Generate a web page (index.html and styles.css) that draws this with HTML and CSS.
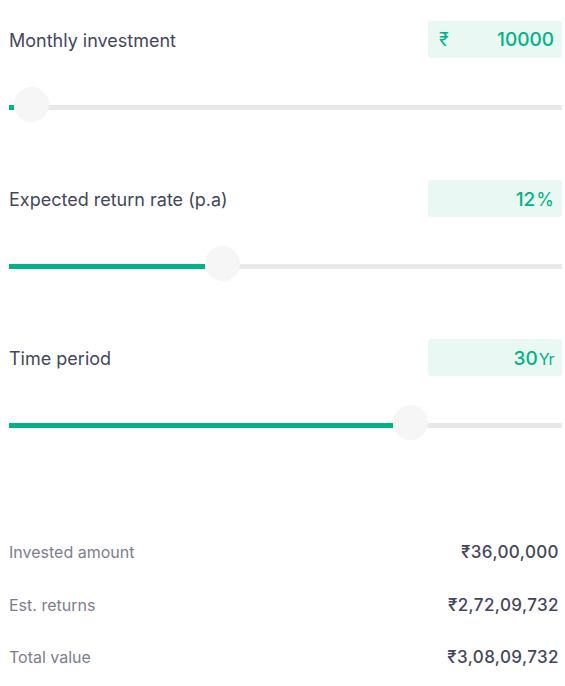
FILE: index.html
```html
<!DOCTYPE html>
<html lang="en">
<head>
<meta charset="utf-8">
<title>SIP Calculator</title>
<link rel="stylesheet" href="styles.css">
</head>
<body>
<div class="calc">
  <div class="field">
    <div class="field-head">
      <span class="label">Monthly investment</span>
      <div class="value-box">
        <span class="unit-left">₹</span>
        <span class="num">10000</span>
      </div>
    </div>
    <div class="slider">
      <div class="fill" style="width:5px"></div>
      <div class="thumb" style="left:5px"></div>
    </div>
  </div>

  <div class="field">
    <div class="field-head">
      <span class="label">Expected return rate (p.a)</span>
      <div class="value-box end">
        <span class="num">12</span><span class="pct">%</span>
      </div>
    </div>
    <div class="slider">
      <div class="fill" style="width:196px"></div>
      <div class="thumb" style="left:196px"></div>
    </div>
  </div>

  <div class="field">
    <div class="field-head">
      <span class="label">Time period</span>
      <div class="value-box end">
        <span class="num">30</span><span class="yr">Yr</span>
      </div>
    </div>
    <div class="slider">
      <div class="fill" style="width:384px"></div>
      <div class="thumb" style="left:384px"></div>
    </div>
  </div>

  <div class="results">
    <div class="row"><span class="r-label">Invested amount</span><span class="r-value">₹36,00,000</span></div>
    <div class="row"><span class="r-label">Est. returns</span><span class="r-value">₹2,72,09,732</span></div>
    <div class="row"><span class="r-label">Total value</span><span class="r-value">₹3,08,09,732</span></div>
  </div>
</div>
</body>
</html>
```

FILE: styles.css
```css
body {
  margin: 0;
  background: #ffffff;
  font-family: Inter, "Noto Sans", "DejaVu Sans", sans-serif;
}

.calc {
  width: 553px;
  margin-left: 9px;
  padding-top: 21px;
  display: flex;
  flex-direction: column;
}

.field {
  display: flex;
  flex-direction: column;
  margin-bottom: 70px;
}

.field-head {
  display: flex;
  justify-content: space-between;
  align-items: center;
  height: 37px;
}

.label {
  font-size: 18px;
  color: #44475b;
  padding-top: 2px;
}

.value-box {
  width: 134px;
  height: 37px;
  box-sizing: border-box;
  background: #e9f8f2;
  border-radius: 3px;
  display: flex;
  align-items: center;
  justify-content: space-between;
  padding: 0 8px 0 11px;
  color: #00b386;
}

.value-box.end {
  justify-content: flex-end;
  align-items: baseline;
  padding-top: 8px;
}

.unit-left {
  font-size: 18px;
}

.num {
  font-size: 19px;
  font-weight: 500;
}

.pct {
  font-size: 18px;
  margin-left: 1px;
}

.yr {
  font-size: 16px;
  margin-left: 1px;
  letter-spacing: -0.5px;
}

.slider {
  position: relative;
  margin-top: 47px;
  height: 5px;
  background: #e8e8e9;
}

.fill {
  height: 100%;
  background: #00b386;
}

.thumb {
  position: absolute;
  top: -18px;
  width: 35px;
  height: 35px;
  border-radius: 50%;
  background: #f6f6f6;
}

.results {
  margin-top: 28px;
  display: flex;
  flex-direction: column;
  padding-right: 3px;
}

.row {
  display: flex;
  justify-content: space-between;
  align-items: center;
  height: 52.5px;
}

.r-label {
  font-size: 16px;
  color: #7c7e8c;
}

.r-value {
  font-size: 17px;
  font-weight: 500;
  color: #44475b;
  letter-spacing: 0.4px;
}
```
